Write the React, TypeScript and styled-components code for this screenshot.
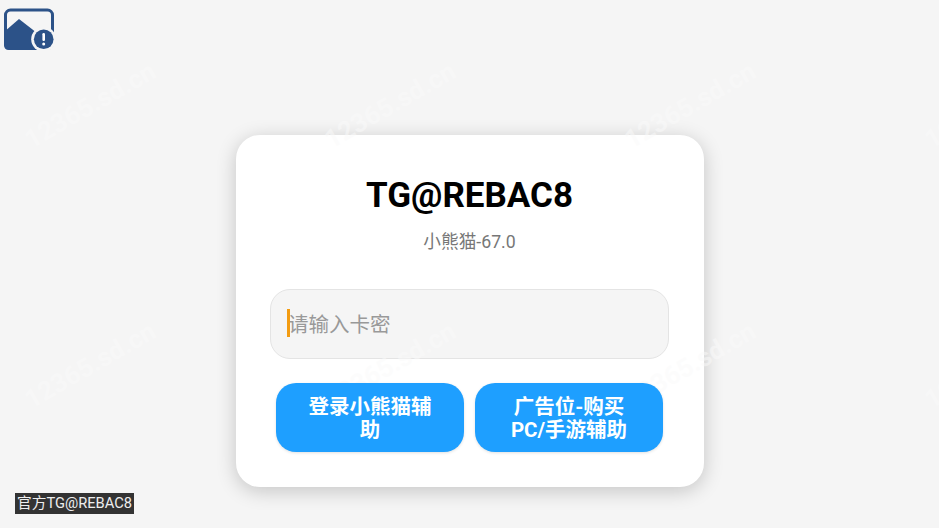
import React from "react";
import styled, { createGlobalStyle } from "styled-components";

const GlobalStyle = createGlobalStyle`
  html, body {
    margin: 0;
    padding: 0;
    background: #f5f5f5;
  }
  * {
    box-sizing: border-box;
  }
`;

const FONT = `Roboto, "Noto Sans CJK SC", sans-serif`;

const Page = styled.div`
  position: relative;
  width: 939px;
  height: 528px;
  overflow: hidden;
  display: flex;
  flex-direction: column;
  background: #f5f5f5;
  font-family: ${FONT};
`;

const TopBar = styled.div`
  height: 135px;
  padding: 8px 0 0 3px;
`;

const Main = styled.main`
  display: flex;
  justify-content: center;
`;

const Card = styled.div`
  width: 468px;
  height: 352px;
  padding: 40px 35px 0;
  background: #fff;
  border-radius: 24px;
  box-shadow: 0 4px 20px rgba(0, 0, 0, 0.2);
  display: flex;
  flex-direction: column;
  align-items: center;
`;

const Title = styled.h1`
  margin: 0;
  font-size: 35px;
  line-height: 42px;
  font-weight: 700;
  color: #000;
`;

const Subtitle = styled.p`
  margin: 13px 0 0;
  font-size: 17.7px;
  line-height: 24px;
  color: #777;
`;

const InputWrap = styled.div`
  position: relative;
  width: 399px;
  height: 70px;
  margin-top: 35px;
`;

const CardInput = styled.input`
  width: 100%;
  height: 100%;
  padding: 2px 17px 0;
  background: #f5f5f5;
  border: 1px solid #e4e4e4;
  border-radius: 20px;
  outline: none;
  font-family: ${FONT};
  font-size: 20.5px;

  &::placeholder {
    color: #999;
    opacity: 1;
  }
`;

const Caret = styled.span`
  position: absolute;
  left: 17px;
  top: 20px;
  width: 3px;
  height: 28px;
  background: #f39c12;
`;

// sits above the watermark layer, the card and input stay under it
const Buttons = styled.div`
  position: relative;
  z-index: 2;
  width: 387px;
  margin-top: 24px;
  display: grid;
  grid-template-columns: 188px 188px;
  justify-content: space-between;
`;

const ActionButton = styled.button`
  height: 69px;
  padding: 3px 25px 0;
  border: none;
  border-radius: 20px;
  background: #1e9fff;
  box-shadow: 0 1px 3px rgba(0, 0, 0, 0.12);
  color: #fff;
  font-family: ${FONT};
  font-size: 20.5px;
  line-height: 23px;
  font-weight: 700;
`;

const Caption = styled.div`
  position: absolute;
  left: 15px;
  top: 493px;
  height: 21px;
  padding: 0 2px;
  background: #333;
  color: #eee;
  font-size: 14.7px;
  line-height: 21px;
  white-space: nowrap;
`;

const WatermarkLayer = styled.div`
  position: absolute;
  z-index: 1;
  left: -60px;
  top: -25px;
  display: grid;
  grid-template-columns: repeat(4, 300px);
  grid-auto-rows: 260px;
  pointer-events: none;
`;

const WatermarkCell = styled.div`
  display: flex;
  align-items: center;
  justify-content: center;
`;

const WatermarkText = styled.span`
  transform: rotate(-30deg);
  font-size: 26px;
  font-weight: 700;
  color: rgba(250, 250, 250, 0.5);
  white-space: nowrap;
`;

const BrokenImageIcon = () => (
  <svg width="52" height="44" viewBox="0 0 52 44">
    <rect x="2.5" y="2" width="47" height="38.5" rx="5" fill="none" stroke="#2c5288" strokeWidth="3" />
    <path
      d="M1 24 L16 11 L34 25 L34 42 L6 42 Q1 42 1 37 Z"
      fill="#2c5288"
    />
    <circle cx="40.7" cy="31.3" r="12.5" fill="#f5f5f5" />
    <circle cx="40.7" cy="31.3" r="9.8" fill="#2c5288" />
    <rect x="39.4" y="25" width="2.6" height="8" rx="1.2" fill="#fff" />
    <circle cx="40.7" cy="36" r="1.5" fill="#fff" />
  </svg>
);

const App: React.FC = () => {
  return (
    <Page>
      <GlobalStyle />
      <TopBar>
        <BrokenImageIcon />
      </TopBar>
      <Main>
        <Card>
          <Title>TG@REBAC8</Title>
          <Subtitle>小熊猫-67.0</Subtitle>
          <InputWrap>
            <CardInput placeholder="请输入卡密" />
            <Caret />
          </InputWrap>
          <Buttons>
            <ActionButton>登录小熊猫辅助</ActionButton>
            <ActionButton>广告位-购买PC/手游辅助</ActionButton>
          </Buttons>
        </Card>
      </Main>
      <Caption>官方TG@REBAC8</Caption>
      <WatermarkLayer>
        {Array.from({ length: 8 }).map((_, i) => (
          <WatermarkCell key={i}>
            <WatermarkText>12365.sd.cn</WatermarkText>
          </WatermarkCell>
        ))}
      </WatermarkLayer>
    </Page>
  );
};

export default App;
